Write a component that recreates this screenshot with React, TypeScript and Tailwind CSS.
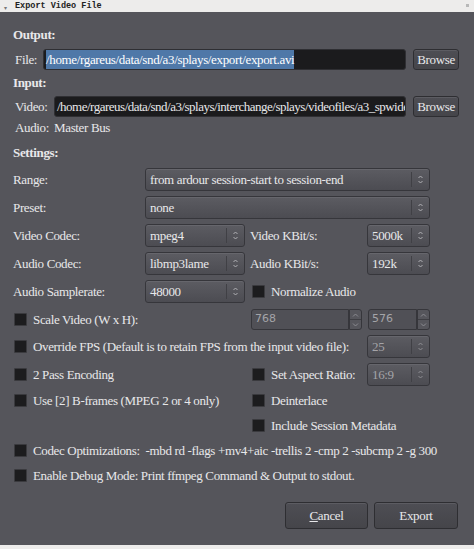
import React from 'react';

const Arrows: React.FC<{ dim?: boolean }> = ({ dim }) => (
  <svg width="7" height="11" viewBox="0 0 7 11" className={dim ? 'opacity-50' : 'opacity-80'}>
    <path d="M1.5 4 L3.5 2 L5.5 4" fill="none" stroke="#c8c8cc" strokeWidth="1" />
    <path d="M1.5 7 L3.5 9 L5.5 7" fill="none" stroke="#c8c8cc" strokeWidth="1" />
  </svg>
);

const Combo: React.FC<{ value: string; className?: string; dim?: boolean }> = ({ value, className = '', dim }) => (
  <div
    className={`flex items-center h-[23px] rounded-[3px] border border-[#36363b] bg-gradient-to-b from-[#5c5c62] to-[#4c4c52] shadow-[inset_0_1px_0_#66666c] ${className}`}
  >
    <span className={`flex-1 pl-[4px] truncate ${dim ? 'text-[#a4a4a8]' : ''}`}>{value}</span>
    <div className="h-[15px] w-px bg-[#404045]" />
    <div className="w-[17px] flex justify-center">
      <Arrows dim={dim} />
    </div>
  </div>
);

const Spin: React.FC<{ value: string; className?: string }> = ({ value, className = '' }) => (
  <div className={`flex h-[21px] ${className}`}>
    <div className="flex-1 flex items-center pl-[3px] rounded-l-[3px] border border-[#36363b] bg-[#505056] text-[#a4a4a8] font-['DejaVu_Sans',sans-serif] text-[11px] tracking-normal">
      {value}
    </div>
    <div className="w-[13px] flex flex-col rounded-r-[3px] border border-[#36363b] bg-[#56565c]">
      <div className="flex-1 flex items-center justify-center border-b border-[#3e3e43]">
        <svg width="7" height="4" viewBox="0 0 7 4"><path d="M1 3.5 L3.5 1 L6 3.5" fill="none" stroke="#8a8a90" /></svg>
      </div>
      <div className="flex-1 flex items-center justify-center">
        <svg width="7" height="4" viewBox="0 0 7 4"><path d="M1 0.5 L3.5 3 L6 0.5" fill="none" stroke="#8a8a90" /></svg>
      </div>
    </div>
  </div>
);

const Check: React.FC = () => (
  <div className="w-[13px] h-[13px] shrink-0 bg-[#1c1c1e] border border-[#3a3a3e] rounded-[1px]" />
);

const Btn: React.FC<{ children: React.ReactNode; className?: string }> = ({ children, className = '' }) => (
  <div
    className={`flex items-center justify-center shrink-0 rounded-[3px] border border-[#2e2e32] bg-gradient-to-b from-[#4e4e54] to-[#45454a] shadow-[inset_0_1px_0_#5c5c62] ${className}`}
  >
    {children}
  </div>
);

export default function App() {
  return (
    <div className="w-[474px] h-[549px] flex flex-col bg-[#55555b] text-[#e8e8ea] text-[13px] tracking-[-0.35px] font-['Liberation_Serif',serif] overflow-hidden">
      {/* title bar */}
      <div className="h-[12px] bg-[#edeceb] flex items-center relative tracking-normal">
        <span className="absolute left-[4px] top-[5px] text-[6px] leading-none text-[#777]">▾</span>
        <span className="ml-[15px] font-['Liberation_Mono',monospace] font-bold text-[8.5px] leading-none text-[#222]">
          Export Video File
        </span>
        <div className="absolute right-[5px] top-[4px] w-[3px] h-[3px] bg-[#b8b8b8]" />
      </div>

      <div className="flex-1 flex flex-col pl-[13px] pr-[15px]">
        <div className="mt-[15px] h-[16px] flex items-center font-bold">Output:</div>
        <div className="mt-[6px] h-[21px] flex items-center">
          <span className="w-[30px] pl-[2px]">File:</span>
          <div className="w-[363px] shrink-0 h-[21px] flex items-center bg-[#1b1b1d] border border-[#2f2f33] rounded-[3px] pl-[2px] overflow-hidden whitespace-nowrap">
            <span className="bg-[#4f78a8] text-white">/home/rgareus/data/snd/a3/splays/export/export.avi</span>
          </div>
          <Btn className="ml-[7px] w-[46px] h-[21px]">Browse</Btn>
        </div>

        <div className="mt-[5px] h-[16px] flex items-center font-bold">Input:</div>
        <div className="mt-[5px] h-[21px] flex items-center">
          <span className="w-[41px] pl-[2px]">Video:</span>
          <div className="w-[352px] shrink-0 h-[21px] flex items-center bg-[#1b1b1d] border border-[#2f2f33] rounded-[3px] pl-[2px] overflow-hidden whitespace-nowrap">
            <span className="tracking-[-0.5px]">/home/rgareus/data/snd/a3/splays/interchange/splays/videofiles/a3_spwide</span>
          </div>
          <Btn className="ml-[7px] w-[46px] h-[21px]">Browse</Btn>
        </div>
        <div className="mt-[4px] h-[14px] flex items-center pl-[2px]">
          <span className="w-[39px]">Audio:</span>
          <span>Master Bus</span>
        </div>

        <div className="mt-[10px] h-[16px] flex items-center font-bold">Settings:</div>

        <div className="mt-[7px] h-[23px] flex items-center">
          <span className="w-[132px]">Range:</span>
          <Combo className="w-[285px]" value="from ardour session-start to session-end" />
        </div>
        <div className="mt-[5px] h-[23px] flex items-center">
          <span className="w-[132px]">Preset:</span>
          <Combo className="w-[285px]" value="none" />
        </div>
        <div className="mt-[5px] h-[23px] flex items-center">
          <span className="w-[132px]">Video Codec:</span>
          <Combo className="w-[100px]" value="mpeg4" />
          <span className="ml-[5px] w-[117px]">Video KBit/s:</span>
          <Combo className="w-[63px]" value="5000k" />
        </div>
        <div className="mt-[5px] h-[23px] flex items-center">
          <span className="w-[132px]">Audio Codec:</span>
          <Combo className="w-[100px]" value="libmp3lame" />
          <span className="ml-[5px] w-[117px]">Audio KBit/s:</span>
          <Combo className="w-[63px]" value="192k" />
        </div>
        <div className="mt-[5px] h-[23px] flex items-center">
          <span className="w-[132px]">Audio Samplerate:</span>
          <Combo className="w-[100px]" value="48000" />
          <div className="ml-[7px] flex items-center gap-[6px]">
            <Check />
            <span>Normalize Audio</span>
          </div>
        </div>

        <div className="mt-[5px] h-[23px] flex items-center">
          <div className="w-[238px] flex items-center gap-[6px] pl-[1px]">
            <Check />
            <span>Scale Video (W x H):</span>
          </div>
          <Spin className="w-[111px]" value="768" />
          <Spin className="ml-[6px] w-[62px]" value="576" />
        </div>
        <div className="mt-[4px] h-[23px] flex items-center">
          <div className="w-[354px] flex items-center gap-[6px] pl-[1px] whitespace-nowrap">
            <Check />
            <span>Override FPS (Default is to retain FPS from the input video file):</span>
          </div>
          <Combo className="w-[63px]" value="25" dim />
        </div>
        <div className="mt-[5px] h-[23px] flex items-center">
          <div className="w-[239px] flex items-center gap-[6px] pl-[1px]">
            <Check />
            <span>2 Pass Encoding</span>
          </div>
          <div className="w-[115px] flex items-center gap-[6px]">
            <Check />
            <span>Set Aspect Ratio:</span>
          </div>
          <Combo className="w-[63px]" value="16:9" dim />
        </div>
        <div className="mt-[3px] h-[23px] flex items-center">
          <div className="w-[239px] flex items-center gap-[6px] pl-[1px]">
            <Check />
            <span>Use [2] B-frames (MPEG 2 or 4 only)</span>
          </div>
          <div className="flex items-center gap-[6px]">
            <Check />
            <span>Deinterlace</span>
          </div>
        </div>
        <div className="mt-[2px] h-[23px] flex items-center pl-[239px]">
          <div className="flex items-center gap-[6px]">
            <Check />
            <span>Include Session Metadata</span>
          </div>
        </div>
        <div className="mt-[2px] h-[23px] flex items-center gap-[6px] pl-[1px] whitespace-nowrap">
          <Check />
          <span>Codec Optimizations:&nbsp; -mbd rd -flags +mv4+aic -trellis 2 -cmp 2 -subcmp 2 -g 300</span>
        </div>
        <div className="mt-[2px] h-[23px] flex items-center gap-[6px] pl-[1px] whitespace-nowrap">
          <Check />
          <span>Enable Debug Mode: Print ffmpeg Command &amp; Output to stdout.</span>
        </div>

        <div className="mt-[15px] flex justify-end gap-[6px] pr-[1px]">
          <Btn className="w-[83px] h-[27px]">
            <span>
              <span className="underline">C</span>ancel
            </span>
          </Btn>
          <Btn className="w-[84px] h-[27px]">Export</Btn>
        </div>
      </div>

      <div className="h-[4px] bg-[#edeceb]" />
    </div>
  );
}
